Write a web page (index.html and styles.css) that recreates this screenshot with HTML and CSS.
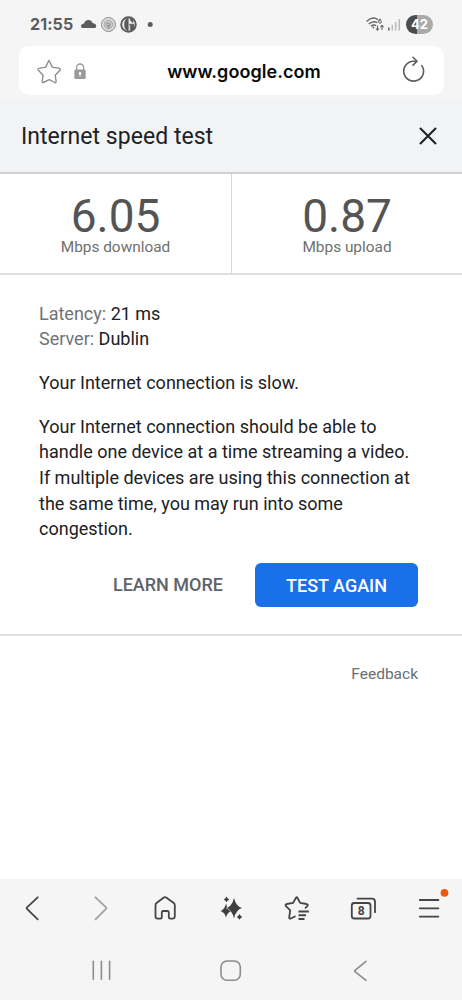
FILE: index.html
```html
<!DOCTYPE html>
<html lang="en">
<head>
<meta charset="utf-8">
<title>Internet speed test</title>
<link rel="stylesheet" href="styles.css">
</head>
<body>
<div class="phone">
  <header class="chrome">
    <div class="status">
      <span class="clock">21:55</span>
      <svg class="notif" width="76" height="20" viewBox="80 14 76 20">
        <path d="M82.500 28 Q80.500 27.500 81 25.500 Q82 23.500 84 23.500 Q85 20 88.500 20 Q91.500 20 92.500 23 Q96 23.500 96.200 26 Q96 27.800 95 28 Z" fill="#5c5c5c"/>
        <circle cx="108.500" cy="24.500" r="7" fill="#dedede" stroke="#8b8b8b" stroke-width="1"/>
        <circle cx="108.500" cy="24.500" r="4.300" fill="#ccc" stroke="#999" stroke-width=".8"/>
        <path d="M106.300 22.500h4.400v2.500q0 2-2.200 3q-2.200-1-2.200-3z" fill="#999"/>
        <path d="M107 25l3-1.500" stroke="#ddd" stroke-width=".7"/>
        <circle cx="128.500" cy="24.500" r="7.300" fill="#eee" stroke="#5b5b5b" stroke-width="1.900"/>
        <path d="M128.200 18v13Q124.600 30 124.600 24.500T128.200 18M130 18.300l3 1.500v2.500h-.8L130 19.500M129.500 24.200h4.500v5l-2.200 1.500h-1.500V25h-.8z" fill="#5b5b5b" stroke="#5b5b5b" stroke-width=".7"/>
        <circle cx="150.200" cy="24.500" r="2.500" fill="#5c5c5c"/>
      </svg>
      <svg class="signal" width="38" height="20" viewBox="364 14 38 20">
        <g fill="none" stroke="#666" stroke-width="1.400">
          <path d="M366.500 21.400Q372.500 15.800 378 19.600M368.700 24Q373 20.200 377.300 22.600M371 26.200Q373.500 24 376 25.600"/>
          <path d="M381 19Q378.500 19 378.500 21.500" stroke-width="1"/><circle cx="380" cy="21.800" r="1.400" stroke-width="1"/>
          <path d="M377.500 25.500v4.500m-1.500-1.500l1.500 1.700 1.500-1.700M382 30v-4.500m-1.500 1.600l1.500-1.700 1.500 1.700" stroke-width="1.100"/>
        </g>
        <circle cx="373.300" cy="27.500" r=".9" fill="#666"/>
        <path d="M388.800 27.500v3" stroke="#666" stroke-width="1.600"/>
        <path d="M392.300 24.800v5.700M395.700 22v8.500M399.300 19v11.500" stroke="#bababa" stroke-width="1.500"/>
      </svg>
      <span class="battery">42</span>
    </div>
    <div class="address">
      <svg width="56" height="28" viewBox="34 56 56 28">
        <path d="M49.200 59.800l3.200 6.300 7 1.300q1.800.5.500 1.900l-4.700 4.900.9 6.200q.1 1.700-1.400 1.100l-5.500-2.800-5.800 2.800q-1.400.5-1.300-1.100l1-6.200-4.700-4.900q-1.200-1.500.5-1.900l6.800-1.300 3-6.300q.3-.5.500 0z" fill="none" stroke="#8e8e8e" stroke-width="1.400" stroke-linejoin="round"/>
        <path d="M76.600 69v-2.500a3.500 3.500 0 0 1 7 0V69" fill="none" stroke="#9a9a9a" stroke-width="1.300"/>
        <rect x="74.300" y="68.500" width="11.400" height="9.500" rx="1.500" fill="#9a9a9a"/>
        <circle cx="80" cy="72.300" r="1.200" fill="#fff"/><path d="M80 72v3.300" stroke="#fff" stroke-width="1"/>
      </svg>
      <span class="url">www.google.com</span>
      <svg width="28" height="30" viewBox="400 56 28 30">
        <g fill="none" stroke="#5d5d5d" stroke-width="1.600" stroke-linecap="round">
          <path d="M416.300 61.300H413.500A9.900 9.900 0 1 0 421.800 65.600"/>
          <path d="M413 57.300l4 3.900-4 3.900"/>
        </g>
      </svg>
    </div>
  </header>
  <main>
    <div class="title"><h1>Internet speed test</h1>
      <svg width="20" height="20" viewBox="0 0 20 20"><path d="M2 2l16 16M18 2L2 18" stroke="#202124" stroke-width="2.100"/></svg>
    </div>
    <section class="results">
      <div class="result"><strong>6.05</strong><span>Mbps download</span></div>
      <div class="result"><strong>0.87</strong><span>Mbps upload</span></div>
    </section>
    <section class="details">
      <p><i>Latency:</i> 21 ms<br><i>Server:</i> Dublin</p>
      <p>Your Internet connection is slow.</p>
      <p>Your Internet connection should be able to<br>handle one device at a time streaming a video.<br>If multiple devices are using this connection at<br>the same time, you may run into some<br>congestion.</p>
      <div class="actions"><span class="learn">LEARN MORE</span><button>TEST AGAIN</button></div>
    </section>
    <div class="feedback">Feedback</div>
  </main>
  <footer>
    <svg width="462" height="121" viewBox="0 879 462 121" fill="none" stroke="#454545" stroke-width="1.800" stroke-linecap="round" stroke-linejoin="round">
      <path d="M37.700 897.300L27 907.300q-.8.800 0 1.600l10.700 10.400"/>
      <path d="M95.500 897.300l10.500 10q.8.800 0 1.600l-10.500 10.400" stroke="#a2a2a2"/>
      <path d="M155.500 905.200q0-1.400 1-2.200l7-5.300q1.500-1.100 3 0l7.300 5.300q1 .8 1 2.200v11q0 2.400-2.300 2.400h-2.200q-1.500 0-1.500-1.600v-4.500q0-1.500-1.500-1.500h-4q-1.500 0-1.500 1.500v4.500q0 1.600-1.600 1.600h-2.300q-2.400 0-2.400-2.400z"/>
      <g fill="#3f3f3f" stroke="none">
        <path d="M226 903.500Q227.200 909.300 231.500 911 227.200 912.300 226 917.500 224.800 912.300 220.500 911 224.800 909.300 226 903.500z"/>
        <path d="M234 898Q236 906.300 242 908 236 909.700 234 918.500 232 909.700 226.500 908 232 906.300 234 898z" stroke="#f5f5f5" stroke-width="1" paint-order="stroke"/>
        <path d="M226.500 896.500q.8 2 2.700 2.900-1.900.9-2.700 2.900-.8-2-2.700-2.900 1.900-.9 2.700-2.900zM239.500 914q.8 2.100 2.800 2.900-2 .8-2.800 2.900-.8-2.100-2.800-2.900 2-.8 2.800-2.900z"/>
      </g>
      <path d="M296 897.700q.7-1.200 1.400 0l2.800 5.200 6.300 1.100q2.300.6.700 2.200l-1.600 1.600M296 897.700l-2.900 5.200-6.400 1.100q-2 .6-.7 2.200l4.200 4.200-1 7q0 1.700 1.700 1.100l4-2"/>
      <path d="M298.500 911.500h10.300M298.500 915.300h7.500M298.500 919h6" stroke-width="1.900" stroke-linecap="butt"/>
      <rect x="351.800" y="903" width="18.700" height="15.500" rx="2.500"/>
      <path d="M357.500 898.700h14.500q3 0 3 3v10.500"/>
      <path d="M419.800 900h18.600M419.800 908.300h18.600M419.800 916.600h18.600"/>
      <circle cx="444.500" cy="892.800" r="3.900" fill="#f1580c" stroke="none"/>
      <g stroke="#8c8c8c" stroke-width="1.600"><path d="M93.300 961.300v18M101.400 961.300v18M109.600 961.300v18"/><rect x="221" y="961" width="19.300" height="19.300" rx="6"/><path d="M366 961.300l-11 9q-.8.700 0 1.400l11 8.600"/></g>
      <text x="361.100" y="914.600" text-anchor="middle" class="tab-count">8</text>
    </svg>
  </footer>
</div>
</body>
</html>
```
FILE: styles.css
```css
* { box-sizing: border-box; }
body { margin: 0; font-family: Roboto, sans-serif; color: #202124; background: #fff; }
svg { display: block; flex: none; }
.phone { width: 462px; height: 1000px; display: flex; flex-direction: column; overflow: hidden; }
.chrome { height: 100px; background: #f5f5f5; }
.status { height: 46px; display: flex; align-items: center; padding: 2px 29px 0 30px; }
.clock { width: 50px; font: 700 16px Inter, sans-serif; letter-spacing: .1px; color: #5c5c5c; }
.signal { margin-left: auto; }
.battery { width: 27px; height: 19px; margin-left: 4px; border-radius: 10px; background: linear-gradient(90deg, #4d4d4d 42%, #aaa 42%); color: #fff; font: 700 13px/19px Inter, sans-serif; text-align: center; }
.address { height: 49px; margin: 0 18px 0 19px; padding: 0 16px 0 15px; background: #fff; border-radius: 10px; display: flex; align-items: center; justify-content: space-between; }
.url { font: 600 18px Inter, sans-serif; letter-spacing: .05px; color: #090909; margin-right: 2px; padding-top: 1px; }
main { flex: 1; }
.title { height: 74px; padding: 0 24px 0 21px; background: #f1f3f5; border-bottom: 2px solid #cfd1d3; display: flex; align-items: center; justify-content: space-between; }
h1 { margin: 0; font-size: 23px; font-weight: 400; letter-spacing: .03px; }
.results { height: 101px; display: grid; grid-template-columns: 232px 230px; border-bottom: 2px solid #dedede; }
.result { display: flex; flex-direction: column; align-items: center; padding-top: 20px; color: #545454; }
.result:first-child { border-right: 1px solid #d8d8d8; }
.result strong { font-size: 46px; line-height: 44px; font-weight: 400; }
.result span { font-size: 15.400px; line-height: 18px; color: #707070; }
.details { height: 361px; padding: 25.500px 44px 0 39px; border-bottom: 2px solid #e1e1e1; font-size: 18px; line-height: 25.700px; }
.details p { margin: 0 0 18px; white-space: nowrap; }
.details i { font-style: normal; color: #707376; }
.actions { display: flex; justify-content: flex-end; align-items: center; gap: 32px; margin-top: 21px; font-size: 18px; font-weight: 500; }
.learn { color: #606368; }
button { width: 163px; height: 44px; border: 0; border-radius: 6px; color: #fff; background: #1a70e8; font: 500 18px Roboto, sans-serif; padding: 0; }
.feedback { text-align: right; padding: 28px 44px 0 0; font-size: 15.500px; line-height: 20px; color: #6b6d70; }
footer { height: 121px; background: #f5f5f5; }
.tab-count { font: 700 12px Roboto, sans-serif; fill: #454545; stroke: none; }
```
